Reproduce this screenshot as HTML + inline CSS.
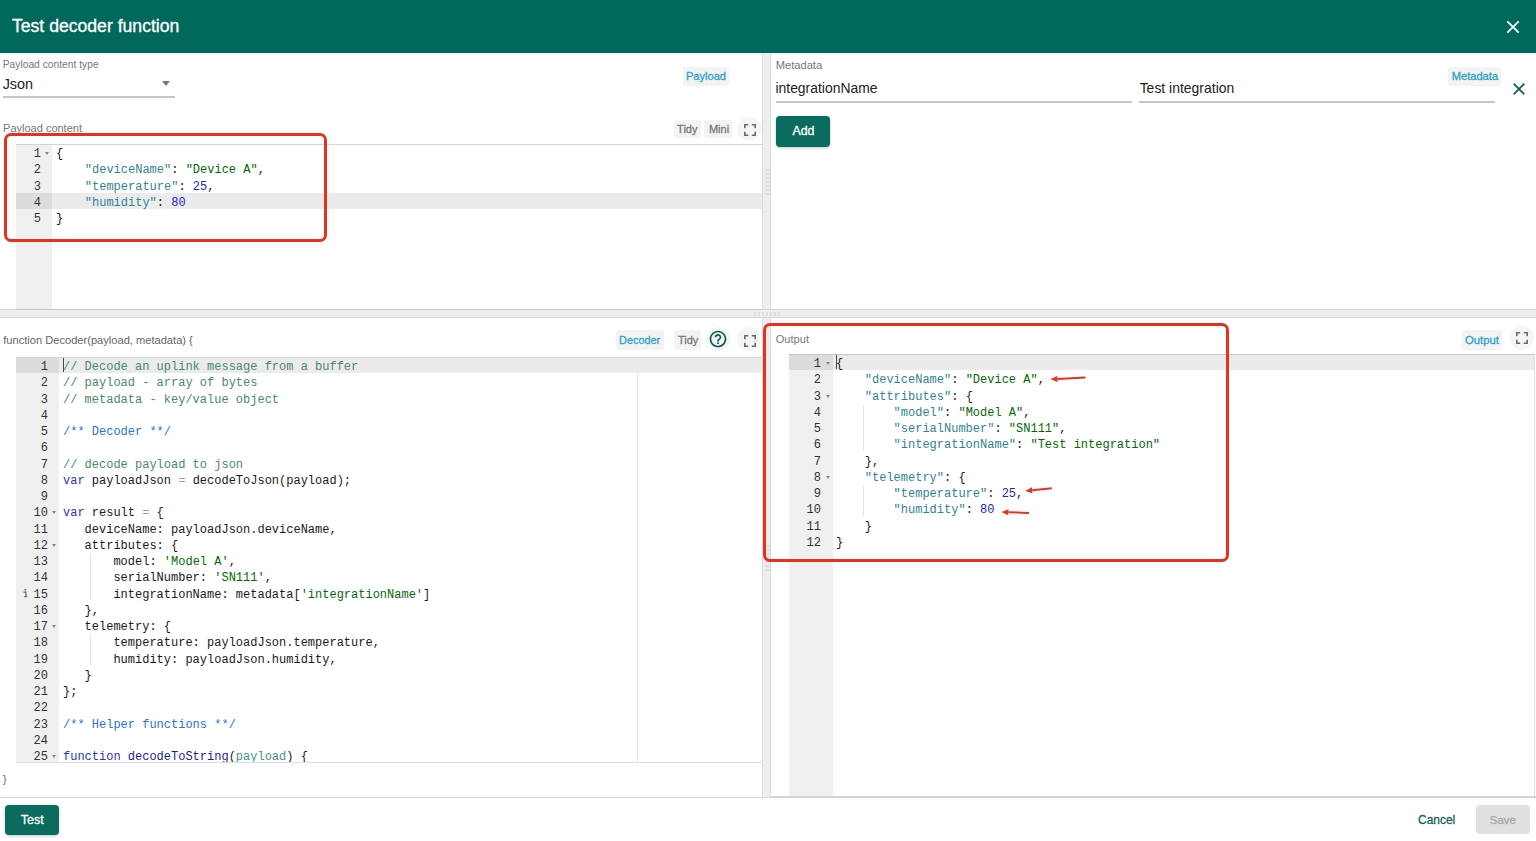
<!DOCTYPE html>
<html><head><meta charset="utf-8">
<style>
*{box-sizing:border-box;margin:0;padding:0}
html,body{width:1536px;height:841px;overflow:hidden;background:#fff;font-family:"Liberation Sans",sans-serif;color:#212121;position:relative}
.abs{position:absolute}
.t{position:absolute;white-space:nowrap;line-height:1}
.chip{position:absolute;background:#f3f3f3;border-radius:3px}
.fsb{position:absolute;width:24px;height:24px;border-radius:12px;background:#f5f5f5}
.ed{position:absolute;font-family:"Liberation Mono",monospace;font-size:12px;line-height:16.25px;overflow:hidden;background:#fff;color:#1a1a1a}
.gut{position:absolute;left:0;top:0;bottom:0;background:#f0f0f0}
.ln{position:absolute;left:0;height:16.25px;text-align:right;padding-right:11px;color:#333;padding-top:2px}
.cl{position:absolute;white-space:pre;height:16.25px;padding-top:2px}
.al{background:#ebebeb}
.gal{background:#dcdcdc}
.fold{position:absolute;width:0;height:0;border-left:2.5px solid transparent;border-right:2.5px solid transparent;border-top:3px solid #888}
.guide{width:1px;background:#e2e2e2}
.info{font-size:9px;color:#777;font-family:"Liberation Serif",serif;font-style:italic}
.s{color:#036a07}.n{color:#2424c4}.k{color:#318495}.c{color:#4c886b}.dc{color:#2a72e0}.kw{color:#2a35c0}.fn{color:#1c1c9a}.pr{color:#3f9488}.op{color:#9a9a9a}
.red{position:absolute;border:3px solid #e8301c;border-radius:7px}
.uline{position:absolute;height:2px;background:#c6c6c6}
.split{position:absolute;background:#eeeeee}
</style></head><body>

<div class="abs" style="left:0;top:0;width:1536px;height:53px;background:#00695c"></div>
<div class="t" style="left:11.96px;top:17.93px;font-size:17.61px;color:#fff;font-weight:normal;-webkit-text-stroke:0.3px currentColor">Test decoder function</div>
<svg class="abs" style="left:1506px;top:20px" width="14" height="14" viewBox="0 0 14 14"><path d="M1.3 1.3L12.7 12.7M12.7 1.3L1.3 12.7" stroke="#fff" stroke-width="1.8"/></svg>
<div class="split" style="left:762px;top:53px;width:9px;height:744px;border-left:1px solid #dcdcdc;border-right:1px solid #dcdcdc"></div>
<div class="split" style="left:0;top:309px;width:1536px;height:9px;border-top:1px solid #d6d6d6;border-bottom:1px solid #d6d6d6"></div>
<div class="abs" style="left:765px;top:167px;width:5px;height:28px;background:repeating-linear-gradient(0deg,#dedede 0 2px,transparent 2px 4px)"></div>
<div class="abs" style="left:765px;top:545px;width:5px;height:26px;background:repeating-linear-gradient(0deg,#dedede 0 2px,transparent 2px 4px)"></div>
<div class="abs" style="left:754px;top:312px;width:27px;height:4px;background:repeating-linear-gradient(90deg,#dedede 0 2px,transparent 2px 4px)"></div>
<div class="t" style="left:2.73px;top:59.97px;font-size:10.27px;color:#777;font-weight:normal;">Payload content type</div>
<div class="t" style="left:2.64px;top:76.54px;font-size:14.42px;color:#222;font-weight:normal;">Json</div>
<div class="abs" style="left:162px;top:81px;width:0;height:0;border-left:4.5px solid transparent;border-right:4.5px solid transparent;border-top:5px solid #777"></div>
<div class="uline" style="left:3px;top:96px;width:172px"></div>
<div class="chip" style="left:683px;top:67px;width:46px;height:19px"></div>
<div class="t" style="left:685.97px;top:71.38px;font-size:11.08px;color:#2aa3c9;font-weight:normal;-webkit-text-stroke:0.3px currentColor">Payload</div>
<div class="t" style="left:3.08px;top:123.45px;font-size:11.0px;color:#777;font-weight:normal;">Payload content</div>
<div class="chip" style="left:674px;top:120px;width:27px;height:18px"></div>
<div class="t" style="left:677.11px;top:123.99px;font-size:11px;color:#777;font-weight:normal;-webkit-text-stroke:0.3px currentColor">Tidy</div>
<div class="chip" style="left:704px;top:120px;width:28px;height:18px"></div>
<div class="t" style="left:708.95px;top:123.99px;font-size:11px;color:#777;font-weight:normal;-webkit-text-stroke:0.3px currentColor">Mini</div>
<div class="fsb" style="left:737px;top:117px"></div>
<div class="abs" style="left:744px;top:121.5px"><svg width="12" height="12" viewBox="0 0 12 12"><path d="M0.8 4.2V0.8H4.2M7.8 0.8H11.2V4.2M11.2 7.8V11.2H7.8M4.2 11.2H0.8V7.8" fill="none" stroke="#6a6a6a" stroke-width="1.6"/></svg></div>
<div class="ed" style="left:16px;top:144px;width:746px;height:165px">
<div class="gut" style="width:36px"></div>
<div class="abs gal" style="left:0;top:48.75px;width:36px;height:16.25px"></div>
<div class="abs al" style="left:36px;top:48.75px;right:0;height:16.25px"></div>
<div class="ln" style="top:0.0px;width:36px;padding-right:11px">1</div>
<div class="fold" style="left:29px;top:8.0px"></div>
<div class="cl" style="left:40px;top:0.0px">{</div>
<div class="ln" style="top:16.25px;width:36px;padding-right:11px">2</div>
<div class="cl" style="left:40px;top:16.25px">    <span class="k">"deviceName"</span>: <span class="s">"Device A"</span>,</div>
<div class="ln" style="top:32.5px;width:36px;padding-right:11px">3</div>
<div class="cl" style="left:40px;top:32.5px">    <span class="k">"temperature"</span>: <span class="n">25</span>,</div>
<div class="ln" style="top:48.75px;width:36px;padding-right:11px">4</div>
<div class="cl" style="left:40px;top:48.75px">    <span class="k">"humidity"</span>: <span class="n">80</span></div>
<div class="ln" style="top:65.0px;width:36px;padding-right:11px">5</div>
<div class="cl" style="left:40px;top:65.0px">}</div>
</div>
<div class="abs" style="left:16px;top:309px;width:746px;height:1px;background:#c4c4c4"></div>
<div class="abs" style="left:16px;top:144px;width:746px;height:1px;background:#d4d4d4"></div>
<div class="t" style="left:775.66px;top:60.2px;font-size:11.17px;color:#777;font-weight:normal;">Metadata</div>
<div class="t" style="left:775.46px;top:82.28px;font-size:13.91px;color:#222;font-weight:normal;">integrationName</div>
<div class="uline" style="left:776px;top:101px;width:356px"></div>
<div class="t" style="left:1139.65px;top:82.34px;font-size:13.96px;color:#222;font-weight:normal;">Test integration</div>
<div class="uline" style="left:1139px;top:101px;width:356px"></div>
<div class="chip" style="left:1448px;top:67px;width:53px;height:19px"></div>
<div class="t" style="left:1451.66px;top:71.33px;font-size:11.15px;color:#2aa3c9;font-weight:normal;-webkit-text-stroke:0.3px currentColor">Metadata</div>
<svg class="abs" style="left:1513px;top:83px" width="12" height="12" viewBox="0 0 12 12"><path d="M0.7 0.7L11.3 11.3M11.3 0.7L0.7 11.3" stroke="#0b5f50" stroke-width="1.7"/></svg>
<div class="abs" style="left:776px;top:116px;width:54px;height:31px;background:#0a6b5e;border-radius:4px;box-shadow:0 1px 3px rgba(0,0,0,.25)"></div>
<div class="t" style="left:792.6px;top:124.65px;font-size:12.29px;color:#fff;font-weight:normal;-webkit-text-stroke:0.3px currentColor">Add</div>
<div class="t" style="left:3.22px;top:334.95px;font-size:11.11px;color:#666;font-weight:normal;">function Decoder(payload, metadata) {</div>
<div class="chip" style="left:616px;top:330px;width:48px;height:20px"></div>
<div class="t" style="left:619.09px;top:334.57px;font-size:10.86px;color:#2aa3c9;font-weight:normal;-webkit-text-stroke:0.3px currentColor">Decoder</div>
<div class="chip" style="left:674px;top:330px;width:27px;height:20px"></div>
<div class="t" style="left:677.96px;top:334.99px;font-size:11px;color:#777;font-weight:normal;-webkit-text-stroke:0.3px currentColor">Tidy</div>
<div class="fsb" style="left:706px;top:327px"></div>
<svg class="abs" style="left:708px;top:329px" width="20" height="20" viewBox="0 0 24 24"><path fill="#0b5e4e" d="M11 18h2v-2h-2v2zm1-16C6.48 2 2 6.48 2 12s4.48 10 10 10 10-4.48 10-10S17.52 2 12 2zm0 18c-4.41 0-8-3.59-8-8s3.590-8 8-8 8 3.59 8 8-3.59 8-8 8zm0-14c-2.21 0-4 1.79-4 4h2c0-1.1.9-2 2-2s2 .9 2 2c0 2-3 1.75-3 5h2c0-2.25 3-2.5 3-5 0-2.210-1.79-4-4-4z"/></svg>
<div class="fsb" style="left:737px;top:327px"></div>
<div class="abs" style="left:744px;top:332.5px"><svg width="12" height="12" viewBox="0 0 12 12"><path d="M0.8 4.2V0.8H4.2M7.8 0.8H11.2V4.2M11.2 7.8V11.2H7.8M4.2 11.2H0.8V7.8" fill="none" stroke="#6a6a6a" stroke-width="1.6"/></svg></div>
<div class="ed" style="left:16px;top:357px;width:746px;height:405px">
<div class="gut" style="width:43px"></div>
<div class="abs gal" style="left:0;top:0.0px;width:43px;height:16.25px"></div>
<div class="abs al" style="left:43px;top:0.0px;right:0;height:16.25px"></div>
<div class="abs" style="left:621px;top:0;bottom:0;width:1px;background:#e8e8e8"></div>
<div class="abs guide" style="left:74.30px;top:197.0px;height:45.75px"></div>
<div class="abs guide" style="left:74.30px;top:278.25px;height:29.5px"></div>
<div class="ln" style="top:0.0px;width:43px;padding-right:11px">1</div>
<div class="cl" style="left:47px;top:0.0px"><span class="c">// Decode an uplink message from a buffer</span></div>
<div class="ln" style="top:16.25px;width:43px;padding-right:11px">2</div>
<div class="cl" style="left:47px;top:16.25px"><span class="c">// payload - array of bytes</span></div>
<div class="ln" style="top:32.5px;width:43px;padding-right:11px">3</div>
<div class="cl" style="left:47px;top:32.5px"><span class="c">// metadata - key/value object</span></div>
<div class="ln" style="top:48.75px;width:43px;padding-right:11px">4</div>
<div class="cl" style="left:47px;top:48.75px"></div>
<div class="ln" style="top:65.0px;width:43px;padding-right:11px">5</div>
<div class="cl" style="left:47px;top:65.0px"><span class="dc">/** Decoder **/</span></div>
<div class="ln" style="top:81.25px;width:43px;padding-right:11px">6</div>
<div class="cl" style="left:47px;top:81.25px"></div>
<div class="ln" style="top:97.5px;width:43px;padding-right:11px">7</div>
<div class="cl" style="left:47px;top:97.5px"><span class="c">// decode payload to json</span></div>
<div class="ln" style="top:113.75px;width:43px;padding-right:11px">8</div>
<div class="cl" style="left:47px;top:113.75px"><span class="kw">var</span> payloadJson <span class="op">=</span> decodeToJson(payload);</div>
<div class="ln" style="top:130.0px;width:43px;padding-right:11px">9</div>
<div class="cl" style="left:47px;top:130.0px"></div>
<div class="ln" style="top:146.25px;width:43px;padding-right:11px">10</div>
<div class="fold" style="left:36px;top:154.25px"></div>
<div class="cl" style="left:47px;top:146.25px"><span class="kw">var</span> result <span class="op">=</span> {</div>
<div class="ln" style="top:162.5px;width:43px;padding-right:11px">11</div>
<div class="cl" style="left:47px;top:162.5px">   deviceName: payloadJson.deviceName,</div>
<div class="ln" style="top:178.75px;width:43px;padding-right:11px">12</div>
<div class="fold" style="left:36px;top:186.75px"></div>
<div class="cl" style="left:47px;top:178.75px">   attributes: {</div>
<div class="ln" style="top:195.0px;width:43px;padding-right:11px">13</div>
<div class="cl" style="left:47px;top:195.0px">       model: <span class="s">'Model A'</span>,</div>
<div class="ln" style="top:211.25px;width:43px;padding-right:11px">14</div>
<div class="cl" style="left:47px;top:211.25px">       serialNumber: <span class="s">'SN111'</span>,</div>
<div class="ln" style="top:227.5px;width:43px;padding-right:11px">15</div>
<div class="cl" style="left:47px;top:227.5px">       integrationName: metadata[<span class="s">'integrationName'</span>]</div>
<div class="ln" style="top:243.75px;width:43px;padding-right:11px">16</div>
<div class="cl" style="left:47px;top:243.75px">   },</div>
<div class="ln" style="top:260.0px;width:43px;padding-right:11px">17</div>
<div class="fold" style="left:36px;top:268.0px"></div>
<div class="cl" style="left:47px;top:260.0px">   telemetry: {</div>
<div class="ln" style="top:276.25px;width:43px;padding-right:11px">18</div>
<div class="cl" style="left:47px;top:276.25px">       temperature: payloadJson.temperature,</div>
<div class="ln" style="top:292.5px;width:43px;padding-right:11px">19</div>
<div class="cl" style="left:47px;top:292.5px">       humidity: payloadJson.humidity,</div>
<div class="ln" style="top:308.75px;width:43px;padding-right:11px">20</div>
<div class="cl" style="left:47px;top:308.75px">   }</div>
<div class="ln" style="top:325.0px;width:43px;padding-right:11px">21</div>
<div class="cl" style="left:47px;top:325.0px">};</div>
<div class="ln" style="top:341.25px;width:43px;padding-right:11px">22</div>
<div class="cl" style="left:47px;top:341.25px"></div>
<div class="ln" style="top:357.5px;width:43px;padding-right:11px">23</div>
<div class="cl" style="left:47px;top:357.5px"><span class="dc">/** Helper functions **/</span></div>
<div class="ln" style="top:373.75px;width:43px;padding-right:11px">24</div>
<div class="cl" style="left:47px;top:373.75px"></div>
<div class="ln" style="top:390.0px;width:43px;padding-right:11px">25</div>
<div class="fold" style="left:36px;top:398.0px"></div>
<div class="cl" style="left:47px;top:390.0px"><span class="kw">function</span> <span class="fn">decodeToString</span>(<span class="pr">payload</span>) {</div>
<svg class="abs" style="left:7px;top:232.00px" width="5" height="9" viewBox="0 0 5 9"><rect x="1.6" y="0" width="1.6" height="1.6" fill="#666"/><path d="M0.6 3.2H2.9V7.6H4.2M1.2 7.6H2.9" stroke="#666" stroke-width="1.3" fill="none"/></svg>
<div class="abs" style="left:47px;top:1.0px;width:1px;height:14.25px;background:#444"></div>
</div>
<div class="abs" style="left:16px;top:357px;width:746px;height:1px;background:#d4d4d4"></div>
<div class="abs" style="left:16px;top:762px;width:746px;height:1px;background:#e0e0e0"></div>
<div class="t" style="left:3px;top:774px;font-size:10.5px;color:#666;font-weight:normal;letter-spacing:0px;">}</div>
<div class="t" style="left:775.69px;top:333.86px;font-size:11.1px;color:#777;font-weight:normal;">Output</div>
<div class="chip" style="left:1462px;top:330px;width:40px;height:20px"></div>
<div class="t" style="left:1465.04px;top:334.68px;font-size:11.25px;color:#2aa3c9;font-weight:normal;-webkit-text-stroke:0.3px currentColor">Output</div>
<div class="fsb" style="left:1510px;top:326px"></div>
<div class="abs" style="left:1516px;top:330px"><svg width="12" height="12" viewBox="0 0 12 12"><path d="M0.8 4.2V0.8H4.2M7.8 0.8H11.2V4.2M11.2 7.8V11.2H7.8M4.2 11.2H0.8V7.8" fill="none" stroke="#6a6a6a" stroke-width="1.6"/></svg></div>
<div class="ed" style="left:789px;top:354px;width:746px;height:443px">
<div class="gut" style="width:44px"></div>
<div class="abs gal" style="left:0;top:0.0px;width:44px;height:16.25px"></div>
<div class="abs al" style="left:44px;top:0.0px;right:0;height:16.25px"></div>
<div class="abs guide" style="left:74.30px;top:50.75px;height:45.75px"></div>
<div class="abs guide" style="left:74.30px;top:132.0px;height:29.5px"></div>
<div class="ln" style="top:0.0px;width:44px;padding-right:12px">1</div>
<div class="fold" style="left:37px;top:8.0px"></div>
<div class="cl" style="left:47px;top:0.0px">{</div>
<div class="ln" style="top:16.25px;width:44px;padding-right:12px">2</div>
<div class="cl" style="left:47px;top:16.25px">    <span class="k">"deviceName"</span>: <span class="s">"Device A"</span>,</div>
<div class="ln" style="top:32.5px;width:44px;padding-right:12px">3</div>
<div class="fold" style="left:37px;top:40.5px"></div>
<div class="cl" style="left:47px;top:32.5px">    <span class="k">"attributes"</span>: {</div>
<div class="ln" style="top:48.75px;width:44px;padding-right:12px">4</div>
<div class="cl" style="left:47px;top:48.75px">        <span class="k">"model"</span>: <span class="s">"Model A"</span>,</div>
<div class="ln" style="top:65.0px;width:44px;padding-right:12px">5</div>
<div class="cl" style="left:47px;top:65.0px">        <span class="k">"serialNumber"</span>: <span class="s">"SN111"</span>,</div>
<div class="ln" style="top:81.25px;width:44px;padding-right:12px">6</div>
<div class="cl" style="left:47px;top:81.25px">        <span class="k">"integrationName"</span>: <span class="s">"Test integration"</span></div>
<div class="ln" style="top:97.5px;width:44px;padding-right:12px">7</div>
<div class="cl" style="left:47px;top:97.5px">    },</div>
<div class="ln" style="top:113.75px;width:44px;padding-right:12px">8</div>
<div class="fold" style="left:37px;top:121.75px"></div>
<div class="cl" style="left:47px;top:113.75px">    <span class="k">"telemetry"</span>: {</div>
<div class="ln" style="top:130.0px;width:44px;padding-right:12px">9</div>
<div class="cl" style="left:47px;top:130.0px">        <span class="k">"temperature"</span>: <span class="n">25</span>,</div>
<div class="ln" style="top:146.25px;width:44px;padding-right:12px">10</div>
<div class="cl" style="left:47px;top:146.25px">        <span class="k">"humidity"</span>: <span class="n">80</span></div>
<div class="ln" style="top:162.5px;width:44px;padding-right:12px">11</div>
<div class="cl" style="left:47px;top:162.5px">    }</div>
<div class="ln" style="top:178.75px;width:44px;padding-right:12px">12</div>
<div class="cl" style="left:47px;top:178.75px">}</div>
<div class="abs" style="left:47px;top:1.0px;width:1px;height:14.25px;background:#444"></div>
</div>
<div class="abs" style="left:789px;top:354px;width:746px;height:1px;background:#c8c8c8"></div>
<div class="abs" style="left:1534px;top:354px;width:1px;height:443px;background:#ddd"></div>
<div class="abs" style="left:0;top:797px;width:1536px;height:1px;background:#d9d9d9"></div>
<div class="abs" style="left:771px;top:796px;width:765px;height:2px;background:#d2d2d2"></div>
<div class="abs" style="left:5px;top:805px;width:54px;height:30px;background:#0a6b5e;border-radius:4px;box-shadow:0 1px 3px rgba(0,0,0,.25)"></div>
<div class="t" style="left:20.69px;top:813.98px;font-size:12.5px;color:#fff;font-weight:normal;-webkit-text-stroke:0.3px currentColor">Test</div>
<div class="t" style="left:1418.0px;top:814.93px;font-size:11.97px;color:#136656;font-weight:normal;-webkit-text-stroke:0.3px currentColor">Cancel</div>
<div class="abs" style="left:1476px;top:805px;width:54px;height:29px;background:#e0e0e0;border-radius:4px"></div>
<div class="t" style="left:1489.72px;top:815.32px;font-size:11.5px;color:#a8a8a8;font-weight:normal;-webkit-text-stroke:0.3px currentColor">Save</div>
<div class="red" style="left:4px;top:132.8px;width:323.3px;height:109.2px"></div>
<div class="red" style="left:763.2px;top:323px;width:465.8px;height:239px"></div>
<svg class="abs" style="left:0;top:0" width="1536" height="841"><path d="M1085.5,377.4L1057.5,378.9" stroke="#e8301c" stroke-width="2" fill="none"/><path d="M1050.5,379.3L1057.3,375.9L1057.7,381.9Z" fill="#e8301c"/><path d="M1051.8,488.3L1032.2,490.3" stroke="#e8301c" stroke-width="2" fill="none"/><path d="M1025.2,491L1031.9,487.3L1032.5,493.3Z" fill="#e8301c"/><path d="M1029,513L1008.4,512.2" stroke="#e8301c" stroke-width="2" fill="none"/><path d="M1001.4,511.9L1008.5,509.2L1008.3,515.2Z" fill="#e8301c"/></svg>
</body></html>
